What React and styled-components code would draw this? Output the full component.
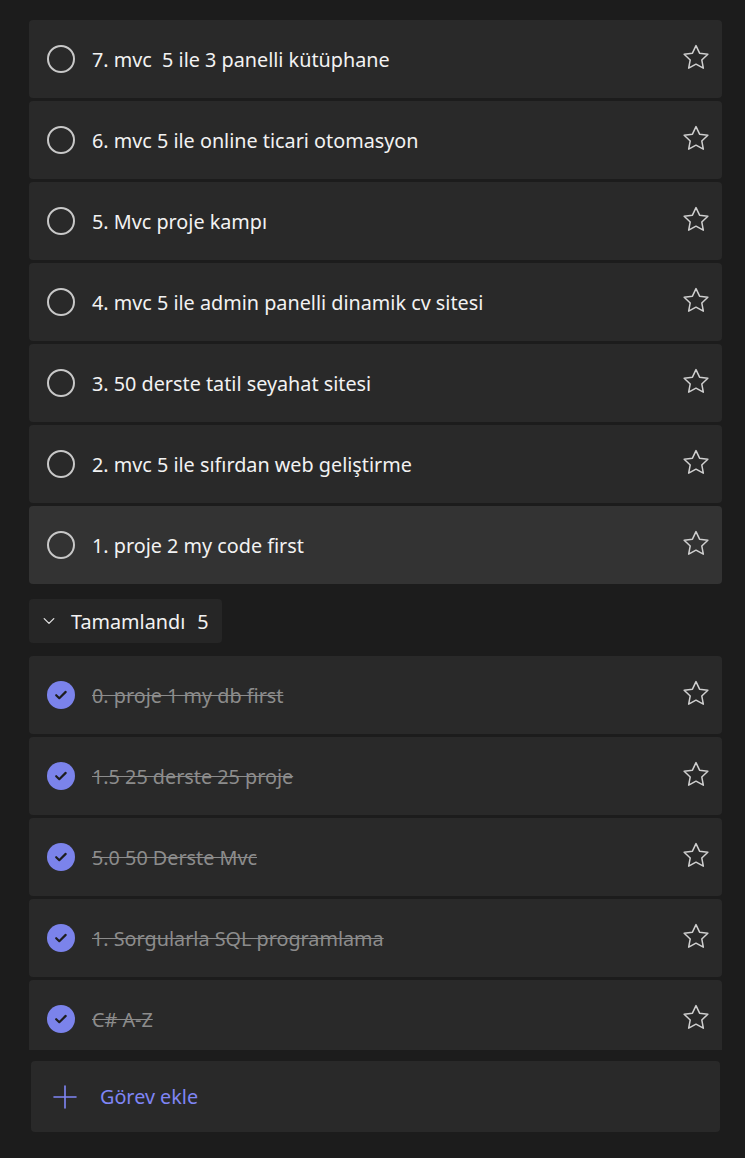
import React from 'react';
import styled, { createGlobalStyle, css } from 'styled-components';

const GlobalStyle = createGlobalStyle`
  html, body {
    margin: 0;
    padding: 0;
    background: #1c1c1c;
  }
  body {
    font-family: "Noto Sans", "Open Sans", sans-serif;
  }
`;

const open = [
  { id: 7, title: '7. mvc  5 ile 3 panelli kütüphane' },
  { id: 6, title: '6. mvc 5 ile online ticari otomasyon' },
  { id: 5, title: '5. Mvc proje kampı' },
  { id: 4, title: '4. mvc 5 ile admin panelli dinamik cv sitesi' },
  { id: 3, title: '3. 50 derste tatil seyahat sitesi' },
  { id: 2, title: '2. mvc 5 ile sıfırdan web geliştirme' },
  { id: 1, title: '1. proje 2 my code first', hover: true },
];

const done = [
  '0. proje 1 my db first',
  '1.5 25 derste 25 proje',
  '5.0 50 Derste Mvc',
  '1. Sorgularla SQL programlama',
  'C# A-Z',
];

const StarIcon = () => (
  <svg width="26" height="26" viewBox="0 0 24 24" fill="none">
    <path
      d="M12 1.5L15.29 8.47 22.94 9.45 17.33 14.73 18.76 22.3 12 18.6 5.24 22.3 6.67 14.73 1.06 9.45 8.71 8.47Z"
      stroke="#cfcfcf"
      strokeWidth="1.4"
      strokeLinejoin="round"
    />
  </svg>
);

const CheckIcon = () => (
  <svg width="16" height="16" viewBox="0 0 16 16" fill="none">
    <path d="M3.2 8.2l3.1 3 6.4-6.3" stroke="#1e1e1e" strokeWidth="2.2" strokeLinecap="round" strokeLinejoin="round" />
  </svg>
);

const ChevronIcon = () => (
  <svg width="14" height="14" viewBox="0 0 14 14" fill="none">
    <path d="M2.2 4.6l4.8 4.8 4.8-4.8" stroke="#e0e0e0" strokeWidth="1.3" strokeLinecap="round" strokeLinejoin="round" />
  </svg>
);

const PlusIcon = () => (
  <svg width="24" height="24" viewBox="0 0 24 24" fill="none">
    <path d="M12 1v22M1 12h22" stroke="#7f85f5" strokeWidth="1.6" strokeLinecap="round" />
  </svg>
);

const App = () => {
  return (
    <Page>
      <GlobalStyle />
      <ScrollArea>
        <List>
          {open.map((t) => (
            <Task key={t.id} $hover={t.hover}>
              <Circle />
              <Title>{t.title}</Title>
              <StarButton><StarIcon /></StarButton>
            </Task>
          ))}
        </List>
        <SectionToggle>
          <ChevronIcon />
          <span>Tamamlandı</span>
          <span>5</span>
        </SectionToggle>
        <List>
          {done.map((t) => (
            <Task key={t}>
              <DoneCircle><CheckIcon /></DoneCircle>
              <Title $done>{t}</Title>
              <StarButton><StarIcon /></StarButton>
            </Task>
          ))}
        </List>
      </ScrollArea>
      <Footer>
        <AddTask>
          <PlusIcon />
          <AddLabel>Görev ekle</AddLabel>
        </AddTask>
      </Footer>
    </Page>
  );
};

const Page = styled.div`
  width: 745px;
  height: 1158px;
  background: #1c1c1c;
  display: flex;
  flex-direction: column;
  overflow: hidden;
`;

const ScrollArea = styled.div`
  height: 1050px;
  overflow: hidden;
  padding: 20px 23px 0 29px;
  box-sizing: border-box;
`;

const List = styled.div`
  display: flex;
  flex-direction: column;
  gap: 3px;
`;

const Task = styled.div`
  display: flex;
  align-items: center;
  height: 78px;
  padding: 0 13px 0 18px;
  background: #292929;
  border-radius: 4px;
  ${(p) => p.$hover && css`
    background: #333333;
  `}
`;

const Circle = styled.span`
  width: 24px;
  height: 24px;
  border: 2px solid #c8c8c8;
  border-radius: 50%;
  flex-shrink: 0;
`;

const DoneCircle = styled.span`
  width: 28px;
  height: 28px;
  border-radius: 50%;
  background: #7b83eb;
  display: flex;
  align-items: center;
  justify-content: center;
  flex-shrink: 0;
`;

const Title = styled.span`
  flex: 1;
  margin-left: 17px;
  font-size: 19.8px;
  color: #f2f2f2;
  white-space: pre;
  ${(p) => p.$done && css`
    color: #8c8c8c;
    text-decoration: line-through;
  `}
`;

const StarButton = styled.span`
  display: flex;
  width: 26px;
  height: 26px;
  margin-top: -4px;
`;

const SectionToggle = styled.div`
  display: inline-flex;
  align-items: center;
  height: 44px;
  margin: 15px 0 13px;
  padding: 0 13px 0 13px;
  background: #262626;
  border-radius: 4px;
  color: #f2f2f2;
  font-size: 19.8px;
  span:nth-of-type(1) { margin-left: 15px; }
  span:nth-of-type(2) { margin-left: 12px; }
`;

const Footer = styled.div`
  padding: 11px 25px 0 31px;
`;

const AddTask = styled.div`
  display: flex;
  align-items: center;
  height: 71px;
  padding: 0 22px;
  background: #292929;
  border-radius: 4px;
`;

const AddLabel = styled.span`
  margin-left: 23px;
  font-size: 19.8px;
  color: #7f85f5;
`;

export default App;
